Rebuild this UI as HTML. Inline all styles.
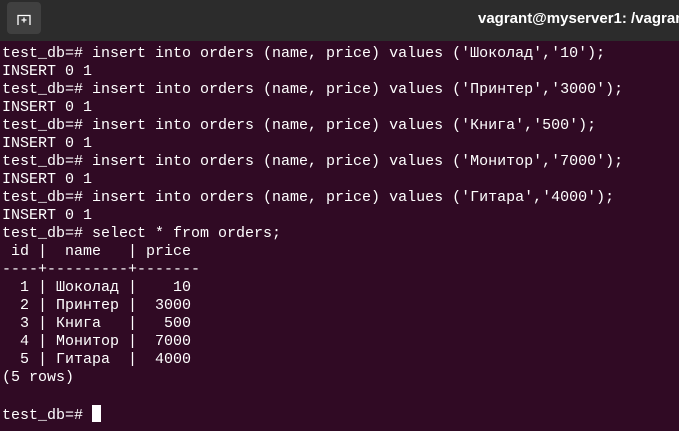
<!DOCTYPE html>
<html><head><meta charset="utf-8"><style>
html,body{margin:0;padding:0;width:679px;height:431px;overflow:hidden;background:#300a24;}
.bar{position:absolute;left:0;top:0;width:679px;height:41px;background:#2c2c2c;}
.btn{position:absolute;left:7px;top:2px;width:34px;height:32px;background:#404040;border-radius:4px;}
.title{position:absolute;left:478px;top:10px;color:#fff;font:bold 15px "Liberation Sans",sans-serif;white-space:nowrap;}
pre{position:absolute;left:2px;top:45px;margin:0;color:#fff;font:15px/18px "Liberation Mono","DejaVu Sans Mono",monospace;}
.cur{display:inline-block;width:9px;height:17px;background:#fff;vertical-align:-3px;}
</style></head><body>
<div class="bar"><div class="btn"><svg width="34" height="32" viewBox="0 0 34 32"><path d="M11 23V13.5h12V23M17 15.5v5M14.5 18h5" stroke="#fff" stroke-width="1.3" fill="none"/></svg></div>
<div class="title">vagrant@myserver1: /vagrant</div></div>
<pre>test_db=# insert into orders (name, price) values ('Шоколад','10');
INSERT 0 1
test_db=# insert into orders (name, price) values ('Принтер','3000');
INSERT 0 1
test_db=# insert into orders (name, price) values ('Книга','500');
INSERT 0 1
test_db=# insert into orders (name, price) values ('Монитор','7000');
INSERT 0 1
test_db=# insert into orders (name, price) values ('Гитара','4000');
INSERT 0 1
test_db=# select * from orders;
 id |  name   | price
----+---------+-------
  1 | Шоколад |    10
  2 | Принтер |  3000
  3 | Книга   |   500
  4 | Монитор |  7000
  5 | Гитара  |  4000
(5 rows)

test_db=# <span class="cur"></span></pre>
</body></html>
